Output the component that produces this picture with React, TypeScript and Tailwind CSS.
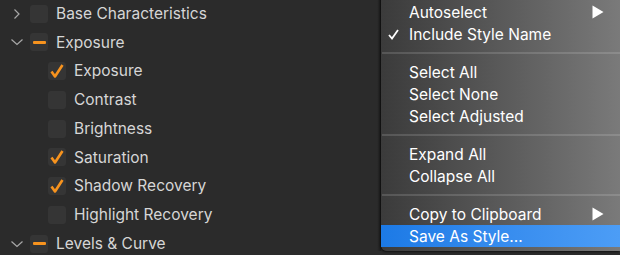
import React from "react";

type Row = { label: string; level: 0 | 1; state: "none" | "check" | "dash"; chevron?: "right" | "down" };

const rows: Row[] = [
  { label: "Base Characteristics", level: 0, state: "none", chevron: "right" },
  { label: "Exposure", level: 0, state: "dash", chevron: "down" },
  { label: "Exposure", level: 1, state: "check" },
  { label: "Contrast", level: 1, state: "none" },
  { label: "Brightness", level: 1, state: "none" },
  { label: "Saturation", level: 1, state: "check" },
  { label: "Shadow Recovery", level: 1, state: "check" },
  { label: "Highlight Recovery", level: 1, state: "none" },
  { label: "Levels & Curve", level: 0, state: "dash", chevron: "down" },
];

function Chevron({ dir }: { dir: "right" | "down" }) {
  return (
    <svg width="12" height="12" viewBox="0 0 12 12" className="shrink-0">
      {dir === "right" ? (
        <path d="M3.5 1.5 L8 6 L3.5 10.5" fill="none" stroke="#a8a8a8" strokeWidth="1.2" />
      ) : (
        <path d="M0.5 3.5 L6 8.5 L11.5 3.5" fill="none" stroke="#a8a8a8" strokeWidth="1.2" />
      )}
    </svg>
  );
}

function Box({ state }: { state: Row["state"] }) {
  return (
    <div className="w-[18px] h-[18px] rounded-[3px] bg-[#353535] flex items-center justify-center shrink-0">
      {state === "dash" && <div className="w-[13px] h-[3px] rounded-[1px] bg-[#f7931e]" />}
      {state === "check" && (
        <svg width="16" height="16" viewBox="0 0 16 16">
          <path d="M2.5 8.5 L6 13.5 L13.5 2" fill="none" stroke="#f7931e" strokeWidth="2.6" strokeLinejoin="round" />
        </svg>
      )}
    </div>
  );
}

function Item({ label, check, arrow, active }: { label: string; check?: boolean; arrow?: boolean; active?: boolean }) {
  return (
    <div
      className={
        "h-[22px] flex items-center pl-[7px] pr-[16px] " +
        (active ? "bg-gradient-to-r from-[#1c7ae6] to-[#4c9df6]" : "")
      }
    >
      <div className="w-[21px] flex items-center pt-[1px]">
        {check && (
          <svg width="11" height="11" viewBox="0 0 11 11">
            <path d="M1 6 L4 9.5 L10 1" fill="none" stroke="#ffffff" strokeWidth="1.8" />
          </svg>
        )}
      </div>
      <div className="flex-1 text-[15.5px] text-white leading-none pt-[2px]">{label}</div>
      {arrow && (
        <svg width="12" height="14" viewBox="0 0 12 14">
          <path d="M0.5 0.5 L11.5 7 L0.5 13.5 Z" fill="#ffffff" />
        </svg>
      )}
    </div>
  );
}

function Sep() {
  return <div className="h-[2px] my-[7px] ml-[1px] bg-gradient-to-r from-[#565656] to-[#8c8c8c]" />;
}

export default function App() {
  return (
    <div
      className="relative w-[620px] h-[255px] overflow-hidden bg-[#2b2b2b]"
      style={{ fontFamily: "Inter, 'Noto Sans', sans-serif" }}
    >
      <div className="-mt-[0.8px] flex flex-col">
        {rows.map((r, i) => (
          <div key={i} className="h-[28.75px] flex items-center">
            {r.level === 0 ? (
              <>
                <div className="w-[30px] pl-[11px] flex items-center">
                  {r.chevron && <Chevron dir={r.chevron} />}
                </div>
                <Box state={r.state} />
                <span className="ml-[8px] text-[15.5px] text-[#d6d6d6]">{r.label}</span>
              </>
            ) : (
              <>
                <div className="w-[48px]" />
                <Box state={r.state} />
                <span className="ml-[8px] text-[15.5px] text-[#d6d6d6]">{r.label}</span>
              </>
            )}
          </div>
        ))}
      </div>

      <div className="absolute left-[377px] top-[-20px] w-[4px] h-[271px] bg-gradient-to-r from-transparent to-[#1e1e1e]" />
      <div className="absolute left-[381px] top-[-4px] right-0 h-[255px] rounded-bl-[6px] bg-gradient-to-r from-[#3b3b3b] to-[#7a7a7a] pt-[5px] shadow-[-1px_1px_2px_rgba(0,0,0,0.6)]">
        <Item label="Autoselect" arrow />
        <Item label="Include Style Name" check />
        <Sep />
        <Item label="Select All" />
        <Item label="Select None" />
        <Item label="Select Adjusted" />
        <Sep />
        <Item label="Expand All" />
        <Item label="Collapse All" />
        <Sep />
        <Item label="Copy to Clipboard" arrow />
        <Item label="Save As Style..." active />
      </div>
    </div>
  );
}
